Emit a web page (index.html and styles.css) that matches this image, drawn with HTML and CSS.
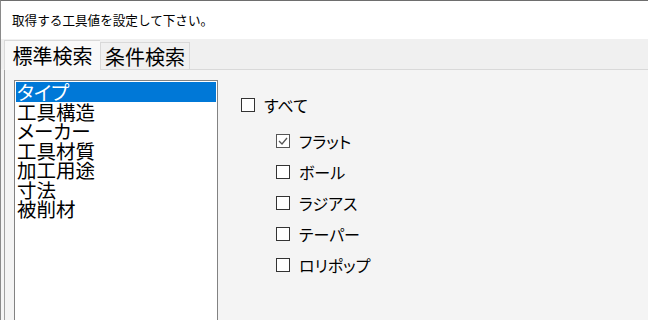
FILE: index.html
```html
<!DOCTYPE html>
<html lang="ja">
<head>
<meta charset="utf-8">
<link rel="stylesheet" href="styles.css">
</head>
<body>
<div class="window">
  <div class="header">取得する工具値を設定して下さい。</div>
  <div class="tabstrip">
    <div class="tab tab-active">標準検索</div>
    <div class="tab">条件検索</div>
  </div>
  <div class="panel">
    <div class="listbox">
      <div class="item selected">タイプ</div>
      <div class="item">工具構造</div>
      <div class="item">メーカー</div>
      <div class="item">工具材質</div>
      <div class="item">加工用途</div>
      <div class="item">寸法</div>
      <div class="item">被削材</div>
    </div>
    <div class="checks">
      <div class="row"><span class="box"></span><span class="label">すべて</span></div>
      <div class="sub">
        <div class="row"><span class="box checked"><svg width="12" height="12" viewBox="0 0 12 12"><polyline points="2,6 5,9 10,3" fill="none" stroke="#555" stroke-width="1.3"/></svg></span><span class="label">フラット</span></div>
        <div class="row"><span class="box"></span><span class="label">ボール</span></div>
        <div class="row"><span class="box"></span><span class="label">ラジアス</span></div>
        <div class="row"><span class="box"></span><span class="label">テーパー</span></div>
        <div class="row"><span class="box"></span><span class="label">ロリポップ</span></div>
      </div>
    </div>
  </div>
</div>
</body>
</html>
```
FILE: styles.css
```css
html, body {
  margin: 0;
  padding: 0;
}
body {
  width: 648px;
  height: 320px;
  overflow: hidden;
  background: #f4f4f4;
  font-family: "Noto Sans CJK JP", "Noto Sans", sans-serif;
  color: #000;
}
.window {
  border-top: 1px solid #6e6e6e;
  border-left: 1px solid #8a8a8a;
  height: 319px;
  overflow: hidden;
  display: flex;
  flex-direction: column;
}
.header {
  height: 38px;
  line-height: 38px;
  background: #fff;
  padding-left: 11px;
  font-size: 12.6px;
}
.tabstrip {
  height: 30px;
  background: #f0f0f0;
  display: flex;
  align-items: flex-end;
  padding-left: 3px;
}
.tab {
  box-sizing: border-box;
  height: 27px;
  width: 90px;
  border: 1px solid #d9d9d9;
  border-bottom: none;
  font-size: 20px;
  line-height: 27px;
  text-align: center;
  background: #f0f0f0;
}
.tab-active {
  width: 96px;
  height: 30px;
  line-height: 30px;
  background: #f9f9f9;
  position: relative;
  margin-bottom: -1px;
  z-index: 1;
  border-right: none;
}
.panel {
  flex: 1;
  min-height: 0;
  margin-left: 3px;
  border-top: 1px solid #d9d9d9;
  border-left: 1px solid #a0a0a0;
  padding: 10px 0 0 9px;
  display: flex;
  align-items: flex-start;
  overflow: hidden;
}
.listbox {
  box-sizing: border-box;
  width: 204px;
  height: 242px;
  border: 1px solid #828282;
  padding: 1px;
  background: #fff;
  flex-shrink: 0;
}
.item {
  font-size: 19.5px;
  line-height: 19.5px;
  height: 19.5px;
  padding-left: 1px;
  white-space: nowrap;
  font-feature-settings: "palt";
}
.item.selected {
  background: #0078d7;
  color: #fff;
}
.checks {
  margin-left: 23px;
  padding-top: 15px;
}
.sub {
  margin-left: 35px;
  margin-top: 16px;
  display: flex;
  flex-direction: column;
  gap: 11px;
}
.row {
  height: 20px;
  display: flex;
  align-items: center;
}
.box {
  box-sizing: border-box;
  width: 14px;
  height: 14px;
  border: 1px solid #333;
  background: #fff;
  display: flex;
  align-items: center;
  justify-content: center;
  flex-shrink: 0;
}
.box.checked {
  border-color: #555;
}
.label {
  margin-left: 9px;
  font-size: 16px;
  line-height: 20px;
  white-space: nowrap;
  font-feature-settings: "palt";
}
```
